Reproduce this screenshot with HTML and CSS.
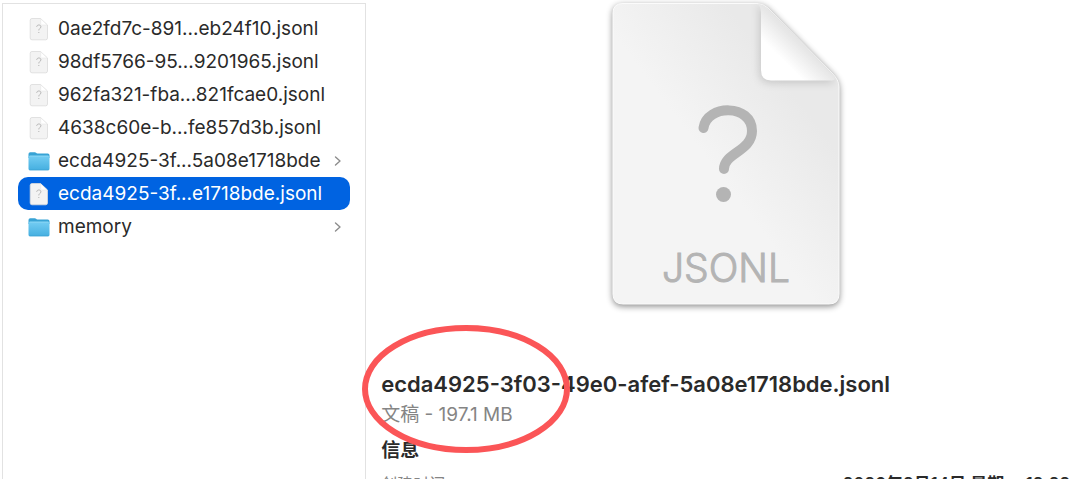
FILE: index.html
```html
<!DOCTYPE html>
<html lang="zh-CN">
<head>
<meta charset="utf-8">
<title>访达</title>
<link rel="stylesheet" href="styles.css">
</head>
<body>
<svg class="defs" aria-hidden="true">
  <defs>
    <linearGradient id="folderFill" x1="0" y1="0" x2="0" y2="1">
      <stop offset="0" stop-color="#74cdf3"/><stop offset="1" stop-color="#45afe0"/>
    </linearGradient>
    <linearGradient id="foldFill" x1="0" y1="1" x2="1" y2="0">
      <stop offset="0" stop-color="#fff"/><stop offset=".3" stop-color="#fff"/><stop offset=".52" stop-color="#e6e6e6"/>
    </linearGradient>
    <linearGradient id="pageFill" x1="0" y1="1" x2="1" y2="0">
      <stop offset="0" stop-color="#f4f4f4"/><stop offset=".45" stop-color="#f4f4f4"/><stop offset=".75" stop-color="#e9e9e9"/>
    </linearGradient>
    <symbol id="file" viewBox="0 0 22 24">
      <path d="M4 1.500h8.500L19.500 8v13a1.800 1.800 0 0 1-1.800 1.800H4A1.800 1.800 0 0 1 2.200 21V3.300A1.800 1.800 0 0 1 4 1.500z" fill="#f3f3f3" stroke="#dadada" stroke-width=".8"/>
      <path d="M12.700 1.800 19.200 8h-5.500a1 1 0 0 1-1-1z" fill="#fff" stroke="#e2e2e2" stroke-width=".5"/>
      <path d="M8.700 9.800c.2-2.600 4.500-2.300 4.200.1-.2 1.600-2.100 1.600-2.100 3.500M10.800 15v1" fill="none" stroke="#b5b5b5" stroke-width="1"/>
    </symbol>
    <symbol id="folder" viewBox="0 0 22 24">
      <path d="M.5 5A1.800 1.800 0 0 1 2.300 3.200h4.500c1.200 0 1.400 1.200 2.600 1.200h10.300A1.800 1.800 0 0 1 21.500 6.200V9H.5z" fill="#38a3d5"/>
      <path d="M.5 8.200A1.500 1.500 0 0 1 2 6.700h18a1.500 1.500 0 0 1 1.500 1.500v11.500a1.500 1.500 0 0 1-1.500 1.500H2a1.500 1.500 0 0 1-1.500-1.500z" fill="url(#folderFill)"/>
      <path d="M1.500 7h19" stroke="#a2e0f9" stroke-width=".6"/>
      <path d="M1.500 20.900h19" stroke="#3da0cf" stroke-width=".6"/>
    </symbol>
    <symbol id="chevron" viewBox="0 0 8 12">
      <path d="M1.500 2 6 6l-4.500 4" fill="none" stroke="#8c8c8c" stroke-width="1.400" stroke-linecap="round" stroke-linejoin="round"/>
    </symbol>
  </defs>
</svg>
<main class="browser">
  <nav class="column" aria-label="文件">
    <ul class="files">
      <li><a class="file" href="#"><svg class="icon"><use href="#file"/></svg><span>0ae2fd7c-891...eb24f10.jsonl</span></a></li>
      <li><a class="file" href="#"><svg class="icon"><use href="#file"/></svg><span>98df5766-95...9201965.jsonl</span></a></li>
      <li><a class="file" href="#"><svg class="icon"><use href="#file"/></svg><span>962fa321-fba...821fcae0.jsonl</span></a></li>
      <li><a class="file" href="#"><svg class="icon"><use href="#file"/></svg><span>4638c60e-b...fe857d3b.jsonl</span></a></li>
      <li><a class="file" href="#"><svg class="icon"><use href="#folder"/></svg><span>ecda4925-3f...5a08e1718bde</span><svg class="chevron"><use href="#chevron"/></svg></a></li>
      <li><a class="file selected" href="#" aria-current="true"><svg class="icon"><use href="#file"/></svg><span>ecda4925-3f...e1718bde.jsonl</span></a></li>
      <li><a class="file" href="#"><svg class="icon"><use href="#folder"/></svg><span>memory</span><svg class="chevron"><use href="#chevron"/></svg></a></li>
    </ul>
  </nav>
  <section class="preview">
    <svg class="document" viewBox="0 0 246 320" role="img" aria-label="JSONL">
      <path class="page" d="M20 3.500H154Q160 3.500 165 8L229 73Q236 80 236 87V294Q236 304 226 304H20Q10 304 10 294V13Q10 3.500 20 3.500z" fill="url(#pageFill)" stroke="#fbfbfb"/>
      <path class="fold" d="M154 4Q160 4 166 10L228 73Q235 80 229 80.500H168Q158 80.500 158 70V12Q158 6 154 4z" fill="url(#foldFill)"/>
      <path d="M100.500 128C104 104 149 104 149 131C149 151 121 153 121 169" fill="none" stroke="#b4b4b4" stroke-width="10" stroke-linecap="round"/>
      <circle cx="120.500" cy="194.500" r="7.500" fill="#b4b4b4"/>
      <text class="kind" x="123" y="282" text-anchor="middle">JSONL</text>
    </svg>
    <div class="details">
      <h1 class="name">ecda4925-3f03-49e0-afef-5a08e1718bde.jsonl</h1>
      <p class="summary">文稿 - 197.1 MB</p>
      <h2 class="heading">信息</h2>
      <dl class="info"><dt>创建时间</dt><dd>2026年2月14日 星期一 12:22</dd></dl>
      <svg class="marker" viewBox="0 0 208 130" aria-hidden="true"><ellipse cx="104" cy="65" rx="101" ry="61" fill="none" stroke="#fb5557" stroke-width="6"/></svg>
    </div>
  </section>
</main>
</body>
</html>
```
FILE: styles.css
```css
* { box-sizing: border-box; }
body {
  margin: 0;
  background: #fff;
  color: #2a2a2a;
  font-family: Inter, "Noto Sans CJK SC", sans-serif;
}
.defs { position: absolute; width: 0; height: 0; }
.browser {
  display: grid;
  grid-template-columns: 34% 1fr;
  height: 100vh;
  overflow: hidden;
}
.column {
  margin: 3px 1px 0 2px;
  padding: 8px 15px;
  border: solid #e2e2e2;
  border-width: 1px 1px 0;
}
.files { margin: 0; padding: 0; list-style: none; }
.file {
  display: flex;
  align-items: center;
  gap: 8px;
  height: 33px;
  padding: 0 8px 0 10px;
  border-radius: 10px;
  color: inherit;
  font-size: 19px;
  line-height: 24px;
  text-decoration: none;
  white-space: nowrap;
}
.selected { background: #0063e1; color: #fff; }
.icon { flex: none; width: 22px; height: 24px; }
.chevron { flex: none; width: 8px; height: 12px; margin-left: auto; }
.preview { min-width: 0; padding-left: 5px; }
.document {
  display: block;
  width: 246px;
  height: 320px;
  margin: 0 auto;
}
.page { filter: drop-shadow(0 2px 3px rgb(0 0 0 / 45%)); }
.fold { filter: drop-shadow(-1px 2px 4px rgb(0 0 0 / 16%)); }
.kind { fill: #b4b4b4; font-size: 39px; font-weight: 300; stroke: #b4b4b4; stroke-width: 1px; }
.details { position: relative; padding: 50px 10px 0 9px; }
.name { margin: 0; font-size: 22px; font-weight: 600; line-height: 28px; white-space: nowrap; }
.summary { margin: 4px 0 0; color: #858585; font-size: 19px; line-height: 26px; }
.heading { margin: 10px 0 0; font-size: 19px; font-weight: 700; line-height: 26px; }
.info {
  display: flex;
  justify-content: space-between;
  margin: 8px 0 0;
  font-size: 16px;
  line-height: 24px;
}
.info dt { color: #858585; }
.info dd { margin: 0; font-size: 17px; font-weight: 600; }
.marker { position: absolute; top: 4px; left: -10px; width: 208px; height: 130px; }
```
